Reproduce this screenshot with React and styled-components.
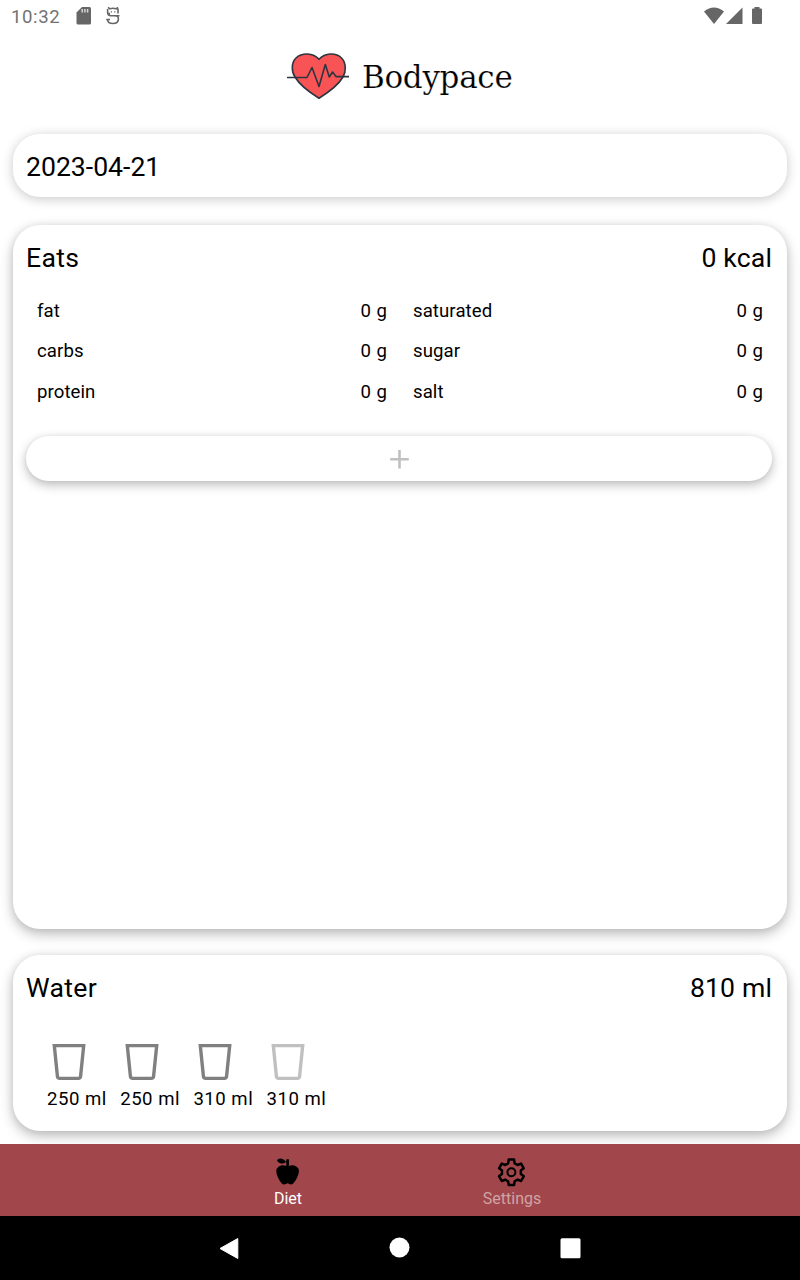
import React from "react";
import styled, { createGlobalStyle } from "styled-components";

const GlobalStyle = createGlobalStyle`
  *, *::before, *::after { box-sizing: border-box; }
  body { margin: 0; background: #fff; font-family: Roboto, "Liberation Sans", sans-serif; color: #000; }
  svg { display: block; flex: none; }
`;

const Screen = styled.div`
  width: 800px;
  height: 1280px;
  display: flex;
  flex-direction: column;
  overflow: hidden;
  background: #fff;
`;

const StatusBar = styled.div`
  height: 32px;
  flex: none;
  display: flex;
  align-items: center;
  justify-content: space-between;
  padding: 0 37px 0 11px;
  color: #666;
`;

const StatusGroup = styled.div`
  display: flex;
  align-items: center;
  gap: 14px;
`;

const Clock = styled.span`
  font-size: 18.6px;
  line-height: 32px;
  letter-spacing: 0.6px;
  width: 51px;
  padding-top: 1px;
  color: #737373;
`;

const Brand = styled.header`
  height: 102px;
  flex: none;
  display: flex;
  align-items: flex-start;
  padding: 20px 0 0 287px;
`;

const BrandName = styled.h1`
  margin: 3px 0 0 13px;
  font-family: "DejaVu Serif", serif;
  font-weight: 400;
  font-size: 31px;
  letter-spacing: -0.3px;
  line-height: 44px;
  -webkit-text-stroke: 0.2px #fff;
`;

const Cards = styled.main`
  flex: 1;
  display: flex;
  flex-direction: column;
  padding: 0 13px 13px;
`;

const Card = styled.section`
  flex: ${(p) => (p.$height ? "none" : "1")};
  height: ${(p) => (p.$height ? `${p.$height}px` : "auto")};
  margin-bottom: ${(p) => p.$gap || 0}px;
  padding: 12px 15px 0 13px;
  border-radius: 27px;
  background: #fff;
  box-shadow: ${(p) =>
    p.$raised
      ? "0 5px 13px rgba(0,0,0,0.26), 0 0 8px rgba(0,0,0,0.08)"
      : "0 2px 12px rgba(0,0,0,0.22)"};
`;

const CardHeader = styled.div`
  display: flex;
  justify-content: space-between;
  font-size: 26.6px;
  line-height: 42px;
`;

const CardTitle = styled.span`
  letter-spacing: 0.3px;
`;

const CardTotal = styled.span`
  letter-spacing: 0.15px;
`;

const Nutrients = styled.div`
  display: grid;
  grid-template-columns: 350px 350px;
  column-gap: 26px;
  grid-auto-rows: 40.3px;
  margin: 12px 0 0 11px;
`;

const Nutrient = styled.div`
  display: flex;
  justify-content: space-between;
  align-items: center;
  font-size: 18.6px;
  letter-spacing: 0.08px;
  word-spacing: 0.8px;
`;

const AddButton = styled.button`
  display: flex;
  align-items: center;
  justify-content: center;
  width: 746px;
  height: 45px;
  margin: 24.1px 0 0;
  padding: 1px 0 0;
  border: 0;
  border-radius: 23px;
  background: #fff;
  box-shadow: 0 4px 11px rgba(0, 0, 0, 0.26), 0 0 5px rgba(0, 0, 0, 0.06);
`;

const Glasses = styled.div`
  display: flex;
  padding: 34px 0 0 21px;
`;

const Glass = styled.div`
  width: 73.2px;
  padding-left: 4.6px;
  color: ${(p) => (p.$empty ? "#c0c0c0" : "#808080")};
`;

const GlassLabel = styled.span`
  display: block;
  margin: 6px 0 0 -4.6px;
  font-size: 18.6px;
  line-height: 24px;
  letter-spacing: 0.5px;
  white-space: nowrap;
  color: #000;
`;

const TabBar = styled.nav`
  height: 72px;
  flex: none;
  display: flex;
  justify-content: center;
  background: #a1464b;
`;

const Tab = styled.div`
  width: 224px;
  display: flex;
  flex-direction: column;
  align-items: center;
  padding-top: 11px;
  color: #000;
`;

const TabLabel = styled.span`
  margin-top: 2px;
  font-size: 16px;
  line-height: 20px;
  color: ${(p) => (p.$active ? "#fff" : "#d0a3a5")};
`;

const SystemBar = styled.div`
  height: 64px;
  flex: none;
  display: flex;
  justify-content: center;
  padding-right: 1px;
  background: #000;
`;

const SystemKey = styled.div`
  width: 171px;
  display: flex;
  align-items: center;
  justify-content: center;
`;

const SdCard = () => (
  <svg width="16" height="18" viewBox="0 0 16 18">
    <path fill="currentColor" d="M6 0H13.500Q15 0 15 1.500V16Q15 17.500 13.500 17.500H2Q.5 17.500 .5 16V5.500Z" />
    <path d="M6.200 2V5.500M8.900 2V5.500M11.600 2V5.500" stroke="#d8d8d8" strokeWidth="1.500" />
  </svg>
);

const DebugMark = () => (
  <svg width="14" height="18" viewBox="0 0 14 18" fill="none" stroke="currentColor" strokeWidth="1.600">
    <path d="M2 .3L3.800 1.800Q7 .8 10.200 1.800L12 .3M12 1.500V6.500M1.600 2V5Q1.600 8.800 5 8.800H9Q12.400 8.800 12.400 12Q12.400 16.500 7 16.500Q1.600 16.500 1.600 12.800M.2 12.500H4M9.500 8.800H13.500M2 6.600H4" />
    <path d="M4.800 4.800H6M8.200 4.800H9.400" strokeWidth="1.300" />
  </svg>
);

const StatusIcons = () => (
  <svg width="60" height="20" viewBox="703 5 60 20" fill="currentColor">
    <path d="M704 10.500Q714 2.500 724 10.500L714 23Z" />
    <path d="M742.500 6.500V23H726Z" />
    <path d="M754.500 7.500V6H759.500V7.500H761Q762 7.500 762 8.500V22Q762 23 761 23H753Q752 23 752 22V8.500Q752 7.500 753 7.500Z" />
  </svg>
);

const HeartLogo = () => (
  <svg width="62" height="48" viewBox="287 52 62 48" strokeLinejoin="round">
    <path d="M319 59.300C313 52.500 302 52.500 296 58C291 63 291.500 72 295 77C300 85.500 309 92 319 98.200C329 92 338 85.500 343 77C346 72 346.500 63 341.500 58C336 52.500 325 52.500 319 59.300Z" fill="#f85355" stroke="#2c3640" strokeWidth="1.600" />
    <path d="M287 77.500H307L312 67.500L319 86.500L325.300 64.500L329.300 77L332.500 72L336 76.600H349" fill="none" stroke="#2c3640" strokeWidth="1.600" />
  </svg>
);

const GlassIcon = () => (
  <svg width="34" height="38" viewBox="0 0 34 38" fill="none" stroke="currentColor" strokeWidth="3.400">
    <path d="M2.300 2.600H31.700L28.600 33.200Q28.400 35.400 26.300 35.400H7.700Q5.600 35.400 5.400 33.200Z" />
  </svg>
);

const AppleIcon = () => (
  <svg width="32" height="32" viewBox="0.300 -0.200 24 24" fill="currentColor">
    <path d="M20,10C22,13 17,22 15,22C13,22 13,21 12,21C11,21 11,22 9,22C7,22 2,13 4,10C6,7 9,7 11,8V5C5.380,8.070 4.110,3.780 4.110,3.780C4.110,3.780 6.770,0.190 11,5V3H13V8C15,7 18,7 20,10Z" />
  </svg>
);

// One tooth of the gear, repeated every 60 degrees around the centre.
const TOOTH = [[-3.2, -9], [-2.700, -12.7], [2.700, -12.7], [3.2, -9], [4.7, -8.2]];
const gearPoints = [0, 60, 120, 180, 240, 300]
  .flatMap((deg) => {
    const a = (deg * Math.PI) / 180;
    return TOOTH.map(([x, y]) => [
      (x * Math.cos(a) - y * Math.sin(a)).toFixed(2),
      (x * Math.sin(a) + y * Math.cos(a)).toFixed(2),
    ]);
  })
  .join(" ");

const GearIcon = () => (
  <svg width="32" height="32" viewBox="-15.400 -17.300 32 32" fill="none" stroke="currentColor" strokeWidth="2.500" strokeLinejoin="round">
    <polygon points={gearPoints} />
    <circle r="4" strokeWidth="2" />
  </svg>
);

const PlusIcon = () => (
  <svg width="20" height="20" viewBox="0 0 20 20" stroke="#c0c0c0" strokeWidth="2.600">
    <path d="M10.500 1V19.500M1.200 10.300H19.800" />
  </svg>
);

const nutrients = ["fat", "saturated", "carbs", "sugar", "protein", "salt"];
const glasses = [
  { amount: 250 },
  { amount: 250 },
  { amount: 310 },
  { amount: 310, empty: true },
];

export default function App() {
  return (
    <Screen>
      <GlobalStyle />
      <StatusBar>
        <StatusGroup>
          <Clock>10:32</Clock>
          <SdCard />
          <DebugMark />
        </StatusGroup>
        <StatusIcons />
      </StatusBar>
      <Brand>
        <HeartLogo />
        <BrandName>Bodypace</BrandName>
      </Brand>
      <Cards>
        <Card $height={63} $gap={28}>
          <CardHeader>2023-04-21</CardHeader>
        </Card>
        <Card $gap={26} $raised>
          <CardHeader>
            <CardTitle>Eats</CardTitle>
            <CardTotal>0 kcal</CardTotal>
          </CardHeader>
          <Nutrients>
            {nutrients.map((name) => (
              <Nutrient key={name}>
                <span>{name}</span>
                <span>0 g</span>
              </Nutrient>
            ))}
          </Nutrients>
          <AddButton aria-label="Add">
            <PlusIcon />
          </AddButton>
        </Card>
        <Card $height={176} $raised>
          <CardHeader>
            <CardTitle>Water</CardTitle>
            <CardTotal>810 ml</CardTotal>
          </CardHeader>
          <Glasses>
            {glasses.map((glass, i) => (
              <Glass key={i} $empty={glass.empty}>
                <GlassIcon />
                <GlassLabel>{glass.amount} ml</GlassLabel>
              </Glass>
            ))}
          </Glasses>
        </Card>
      </Cards>
      <TabBar>
        <Tab>
          <AppleIcon />
          <TabLabel $active>Diet</TabLabel>
        </Tab>
        <Tab>
          <GearIcon />
          <TabLabel>Settings</TabLabel>
        </Tab>
      </TabBar>
      <SystemBar>
        <SystemKey>
          <svg width="20" height="22" viewBox="0 0 20 22" fill="#fff" stroke="#fff" strokeLinejoin="round">
            <path d="M1 11.500L18.800 1.500V21.500Z" />
          </svg>
        </SystemKey>
        <SystemKey>
          <svg width="22" height="22" viewBox="0 0 22 22" fill="#fff">
            <circle cx="10.500" cy="10.500" r="10" />
          </svg>
        </SystemKey>
        <SystemKey>
          <svg width="22" height="22" viewBox="0 0 22 22" fill="#fff">
            <rect x="0.500" y="1.300" width="20" height="20" rx="1.500" />
          </svg>
        </SystemKey>
      </SystemBar>
    </Screen>
  );
}
